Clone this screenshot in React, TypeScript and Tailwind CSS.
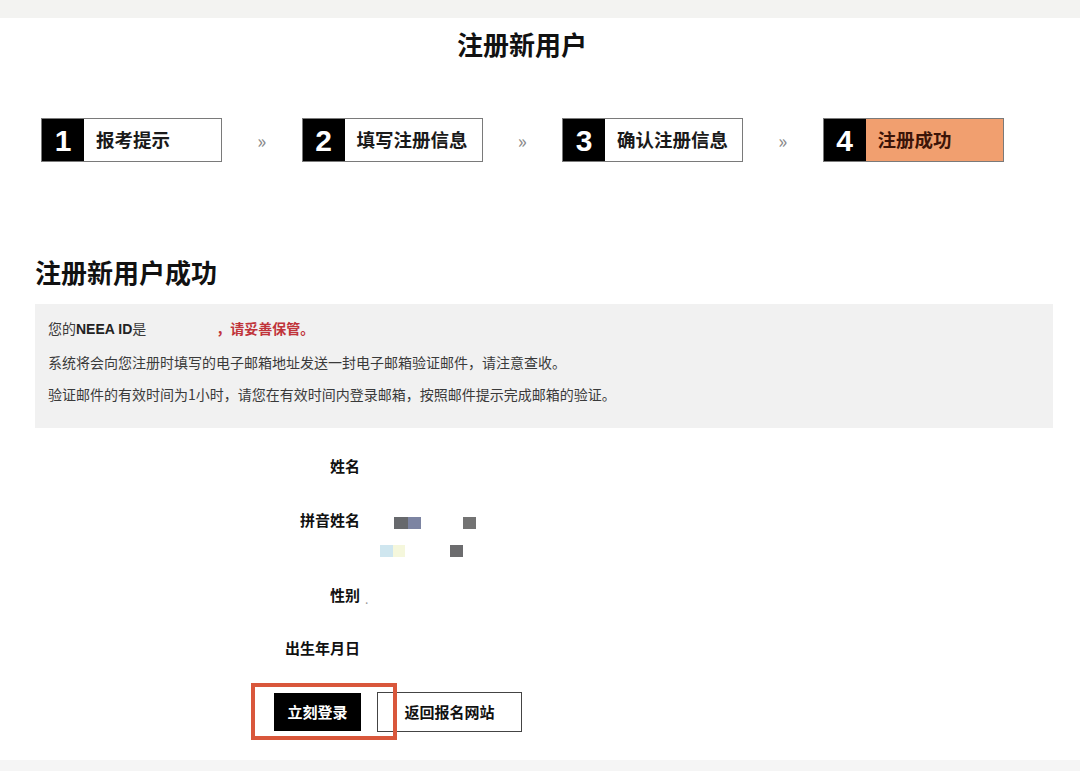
const steps = [
  { n: "1", label: "报考提示", active: false },
  { n: "2", label: "填写注册信息", active: false },
  { n: "3", label: "确认注册信息", active: false },
  { n: "4", label: "注册成功", active: true },
];

function Step({ n, label, active }: { n: string; label: string; active: boolean }) {
  return (
    <div
      className={`flex h-[44px] w-[181px] border border-[#7a7a7a] ${
        active ? "bg-[#f19f6f]" : "bg-white"
      }`}
    >
      <div className="flex w-[42px] items-center justify-center bg-black font-['Liberation_Sans',sans-serif] text-[30px] font-bold text-white">
        {n}
      </div>
      <div
        className={`flex items-center pl-[12px] text-[18.5px] font-bold ${
          active ? "text-[#3b1408]" : "text-[#1a1a1a]"
        }`}
      >
        {label}
      </div>
    </div>
  );
}

function Row({
  label,
  height,
  children,
}: {
  label: string;
  height: string;
  children?: React.ReactNode;
}) {
  return (
    <div className={`flex ${height}`}>
      <div className="w-[360px] text-right text-[15px] font-bold leading-[20px] text-[#111]">
        {label}
      </div>
      <div className="relative flex-1">{children}</div>
    </div>
  );
}

export default function App() {
  return (
    <div className="min-h-[771px] w-[1080px] bg-white font-['Noto_Sans_CJK_SC','Noto_Sans',sans-serif] text-[#111]">
      <div className="h-[18px] bg-[#f3f3f1]" />

      <h1 className="flex h-[50px] items-center justify-center pr-[36px] text-[26px] font-bold">
        注册新用户
      </h1>

      <div className="mt-[50px] flex items-center pl-[41px]">
        {steps.map((s, i) => (
          <div key={s.n} className="flex items-center">
            <Step {...s} />
            {i < steps.length - 1 && (
              <div className="w-[79.5px] text-center text-[19px] text-[#8a8a8a]">»</div>
            )}
          </div>
        ))}
      </div>

      <h2 className="mt-[92px] pl-[35px] text-[26px] font-bold leading-[36px]">注册新用户成功</h2>

      <div className="mx-[35px] mt-[14px] h-[124px] w-[1018px] bg-[#f1f1f1] px-[13px] pt-[8px] text-[14px] leading-[32.5px] text-[#3a3a3a]">
        <p>
          您的<span className="font-['Liberation_Sans',sans-serif] font-bold text-[#222]">NEEA ID</span>是
          <span className="inline-block w-[70px]" />
          <span className="font-bold text-[#c0343a]">，请妥善保管。</span>
        </p>
        <p>系统将会向您注册时填写的电子邮箱地址发送一封电子邮箱验证邮件，请注意查收。</p>
        <p>验证邮件的有效时间为1小时，请您在有效时间内登录邮箱，按照邮件提示完成邮箱的验证。</p>
      </div>

      <div className="mt-[28px]">
        <Row label="姓名" height="h-[54px]" />
        <Row label="拼音姓名" height="h-[75px]">
          <div className="flex pt-[7px]">
            <span className="ml-[34px] h-[12px] w-[14px] bg-[#67696d]" />
            <span className="h-[12px] w-[13px] bg-[#7c84a2]" />
            <span className="ml-[42px] h-[12px] w-[13px] bg-[#737373]" />
          </div>
          <div className="mt-[16px] flex">
            <span className="ml-[20px] h-[12px] w-[13px] bg-[#cfe6ef]" />
            <span className="h-[12px] w-[12px] bg-[#f5f7dc]" />
            <span className="ml-[45px] h-[12px] w-[13px] bg-[#6c6c6e]" />
          </div>
        </Row>
        <Row label="性别" height="h-[53px]">
          <span className="ml-[5px] text-[12px] leading-[22px] text-[#999]">.</span>
        </Row>
        <Row label="出生年月日" height="h-[54px]" />
      </div>

      <div className="relative flex items-start pl-[274px]">
        <div className="relative">
          <button className="mt-[1px] h-[38px] w-[87px] bg-black text-[15px] font-bold text-white">
            立刻登录
          </button>
          <div className="pointer-events-none absolute left-[-23px] top-[-9px] h-[57px] w-[146px] border-[4px] border-[#d9573b]" />
        </div>
        <button className="ml-[16px] h-[40px] w-[145px] border border-[#444] bg-white text-[15px] font-bold text-[#111]">
          返回报名网站
        </button>
      </div>

      <div className="mt-[28px] h-[11px] bg-[#f5f5f5]" />
    </div>
  );
}
